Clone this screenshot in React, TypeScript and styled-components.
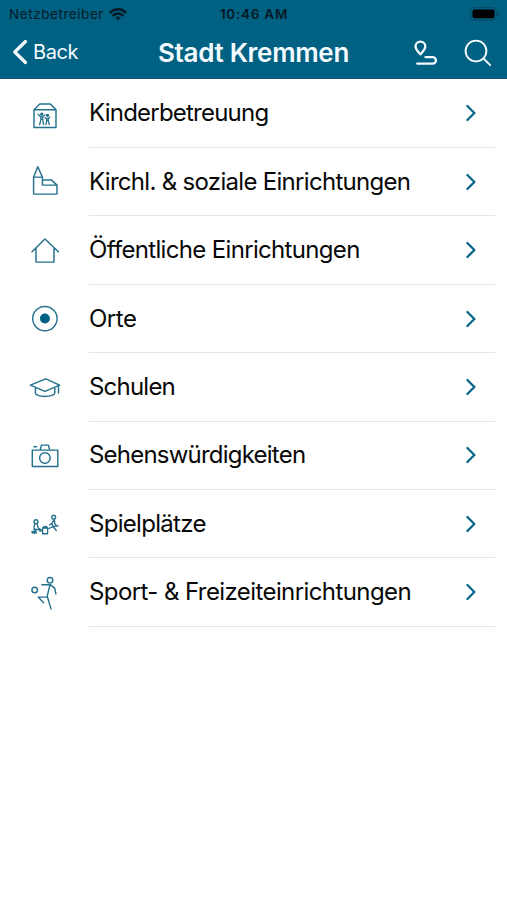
import React from "react";
import styled, { createGlobalStyle } from "styled-components";

const GlobalStyle = createGlobalStyle`
  * { box-sizing: border-box; }
  body { margin: 0; background: #fff; font-family: Inter, "Liberation Sans", sans-serif; }
`;

const Screen = styled.div`
  height: 900px;
  background: #fff;
  overflow: hidden;
`;
const Header = styled.header`
  height: 79px;
  background: #006183;
  border-bottom: 1px solid #14587a;
`;
const StatusBar = styled.div`
  height: 27px;
  padding: 0 8px 0 9px;
  display: grid;
  grid-template-columns: 1fr auto 1fr;
  align-items: center;
  color: #041a24;
  font-size: 13.5px;
`;
const Carrier = styled.div`
  display: flex;
  align-items: center;
  gap: 5px;
  letter-spacing: 0.56px;
`;
const Clock = styled.div`
  font-weight: 600;
  letter-spacing: 0.75px;
`;
const BatterySlot = styled.div`
  display: flex;
  justify-content: flex-end;
`;
const NavBar = styled.div`
  height: 51px;
  padding: 0 14px 0 12px;
  display: grid;
  grid-template-columns: 1fr auto 1fr;
  align-items: center;
  color: #f4fbff;
`;
const BackButton = styled.button`
  display: flex;
  align-items: center;
  gap: 5px;
  padding: 0 0 1px;
  border: 0;
  background: none;
  color: inherit;
  font: 400 20px Inter, sans-serif;
  letter-spacing: -0.4px;
`;
const Title = styled.h1`
  margin: 0;
  padding-left: 2px;
  font-size: 26px;
  font-weight: 600;
  letter-spacing: -0.3px;
  line-height: 50px;
`;
const Actions = styled.div`
  display: flex;
  justify-content: flex-end;
  align-items: center;
  gap: 26px;
`;
const List = styled.ul`
  margin: 0;
  padding: 0.7px 0 0;
  list-style: none;
`;
const Row = styled.li`
  height: 68.4px;
  padding: 0 12px 0 20px;
  display: grid;
  grid-template-columns: 69px 1fr;
  align-items: center;
`;
const RowBody = styled.div`
  height: 100%;
  padding-right: 18.5px;
  display: flex;
  align-items: center;
  justify-content: space-between;
  border-bottom: 1px solid #e3e5e6;
`;
const Label = styled.span<{ $tracking: number }>`
  font-size: 24px;
  line-height: 30px;
  color: #080808;
  white-space: nowrap;
  letter-spacing: ${(p) => p.$tracking}px;
`;
const Glyph = styled.svg`
  display: block;
  overflow: visible;
  fill: none;
  stroke: #24718e;
  stroke-width: 1.45;
  stroke-linecap: round;
  stroke-linejoin: round;
`;
const LineIcon = styled.svg`
  display: block;
  flex: none;
  fill: none;
  stroke: currentColor;
  stroke-linecap: round;
  stroke-linejoin: round;
`;
const Chevron = styled(LineIcon)`
  color: #08658a;
`;

type Entry = { label: string; tracking: number; shift: number; art: React.ReactNode };

const entries: Entry[] = [
  {
    label: "Kinderbetreuung", tracking: -0.78, shift: 1.3,
    art: (
      <>
        <path d="M14 19.5h22v17.6H14zM14 19.5l5.8-5.8h10.6l5.6 5.8" />
        <g strokeWidth="1.3">
          <circle cx="21.8" cy="24" r="1.1" fill="#24718e" />
          <circle cx="27.5" cy="25" r="1" fill="#24718e" />
          <path d="M18.2 24l2.4 2.6h2.4l2.1-2M20.8 27v2.8l-1.2 4.4M22.8 27v2.8l.8 4.4M20.8 29h2M25 27.5l1.6.6h1.8l1.5-1.3M26.7 28v2.5l-.8 3.7M28.3 28v2.5l1 3.7M26.6 30.2h1.8" />
        </g>
      </>
    ),
  },
  {
    label: "Kirchl. & soziale Einrichtungen", tracking: -0.7, shift: -0.1,
    art: <path d="M13.6 37.2V20.2L17.8 9.8l4.6 10.4v8h14.6v9zM13.6 20.2h8.8M22.4 23h9l5.6 5.2" />,
  },
  {
    label: "Öffentliche Einrichtungen", tracking: -0.67, shift: 0.5,
    art: <path d="M12 25.2L25 12.5l13.4 12.7M16 22v13.6h18V22" />,
  },
  {
    label: "Orte", tracking: -0.5, shift: 0.1,
    art: (
      <>
        <circle cx="24.9" cy="24.5" r="12.2" />
        <circle cx="24.9" cy="24.4" r="5" fill="#006183" stroke="none" />
      </>
    ),
  },
  {
    label: "Schulen", tracking: -0.78, shift: -0.1,
    art: <path d="M10.4 23.2l15.4-6.3L39.6 23.2 25 29.4zM15.4 26v5.2c0 1.7 3.8 3.4 9.4 3.4s10-1.7 10-3.4V26M38.5 24v7.2" />,
  },
  {
    label: "Sehenswürdigkeiten", tracking: -0.78, shift: -0.3,
    art: (
      <>
        <path d="M12.3 19.4h25.5v16.4H12.3zM20.2 19.4l1.2-5h7l1.4 5M14 16h2.5" />
        <circle cx="24.9" cy="27.4" r="5.3" />
      </>
    ),
  },
  {
    label: "Spielplätze", tracking: -0.7, shift: 0.8,
    art: (
      <g strokeWidth="1.35">
        <circle cx="16" cy="21.9" r="1.9" />
        <circle cx="33.7" cy="17.4" r="1.9" />
        <path d="M14.8 24.6c-1.3 2-.8 3.5-.6 5M17 24.8l1.4 3.5 2.4 1.5M12 33h4.5l-1.3-3.6 4.6 1M12 31.8l3-.8M20 31.4l2.5-1M22.6 28.4h5V34h-5zM22.6 28.4l1.2-1.4h3l.8 1.4M27.6 29.2l6-2.6 4.5-.6M34.2 19.6l.6 4.2 1.8 2M33.6 20.4l-1.8 3.5-2.2 1.2M32 24l1.3 3.4 2.6-1.6M33.5 27.2l2.8 3.5M14.8 31.4l-.6 2.4" />
      </g>
    ),
  },
  {
    label: "Sport- & Freizeiteinrichtungen", tracking: -0.59, shift: -0.3,
    art: (
      <>
        <circle cx="14.7" cy="22.3" r="2.8" />
        <circle cx="30" cy="12.6" r="2.8" />
        <path d="M21.8 17h8.4l4.5 3.4 1.2 5.8M30 17l-2.8 11.6 3.8 12.6M27.2 29.4h-9l5.4 5.6" />
      </>
    ),
  },
];

export default function App() {
  return (
    <Screen>
      <GlobalStyle />
      <Header>
        <StatusBar>
          <Carrier>
            Netzbetreiber
            <LineIcon width="18" height="14" viewBox="0 0 18 14" strokeWidth="2.5">
              <path d="M1.5 5.3a10.8 10.8 0 0 1 15 0M4.3 8.3a6.8 6.8 0 0 1 9.4 0" />
              <path d="M6.5 10.7a3.7 3.7 0 0 1 5 0L9 13.3z" fill="currentColor" stroke="none" />
            </LineIcon>
          </Carrier>
          <Clock>10:46 AM</Clock>
          <BatterySlot>
            <svg width="29" height="14" viewBox="0 0 29 14">
              <rect x=".7" y=".7" width="25.6" height="12.4" rx="3.5" fill="none" stroke="#044660" />
              <rect x="2.5" y="2.5" width="22" height="8.8" rx="2" fill="#000" />
              <path d="M27.5 5v4q1.2-.7 1.2-2t-1.2-2" fill="#044660" />
            </svg>
          </BatterySlot>
        </StatusBar>
        <NavBar>
          <BackButton>
            <LineIcon width="16" height="26" viewBox="0 0 16 26" strokeWidth="3.2">
              <path d="M13.5 2.5L2.7 13l10.8 10.5" />
            </LineIcon>
            Back
          </BackButton>
          <Title>Stadt Kremmen</Title>
          <Actions>
            <LineIcon width="25" height="26" viewBox="0 0 25 26" strokeWidth="2.3">
              <path d="M7.4 14.4C5.5 11.9 2.5 9.6 2.5 6.6a4.9 4.9 0 0 1 9.8 0c0 3-3 5.3-4.9 7.8z" />
              <path d="M12.5 17.2h7.2a3.2 3.2 0 0 1 0 6.4H4.2" />
            </LineIcon>
            <LineIcon width="29" height="28" viewBox="0 0 29 28" strokeWidth="1.9">
              <circle cx="12" cy="12" r="10.4" />
              <path d="M19.5 19.5l6.7 6.7" />
            </LineIcon>
          </Actions>
        </NavBar>
      </Header>
      <List>
        {entries.map((e) => (
          <Row key={e.label}>
            <Glyph width="60" height="50" viewBox={`0 ${-e.shift} 60 50`}>{e.art}</Glyph>
            <RowBody>
              <Label $tracking={e.tracking}>{e.label}</Label>
              <Chevron width="12" height="20" viewBox="0 0 12 20" strokeWidth="2.3">
                <path d="M2.4 3l7 7-7 7" />
              </Chevron>
            </RowBody>
          </Row>
        ))}
      </List>
    </Screen>
  );
}
